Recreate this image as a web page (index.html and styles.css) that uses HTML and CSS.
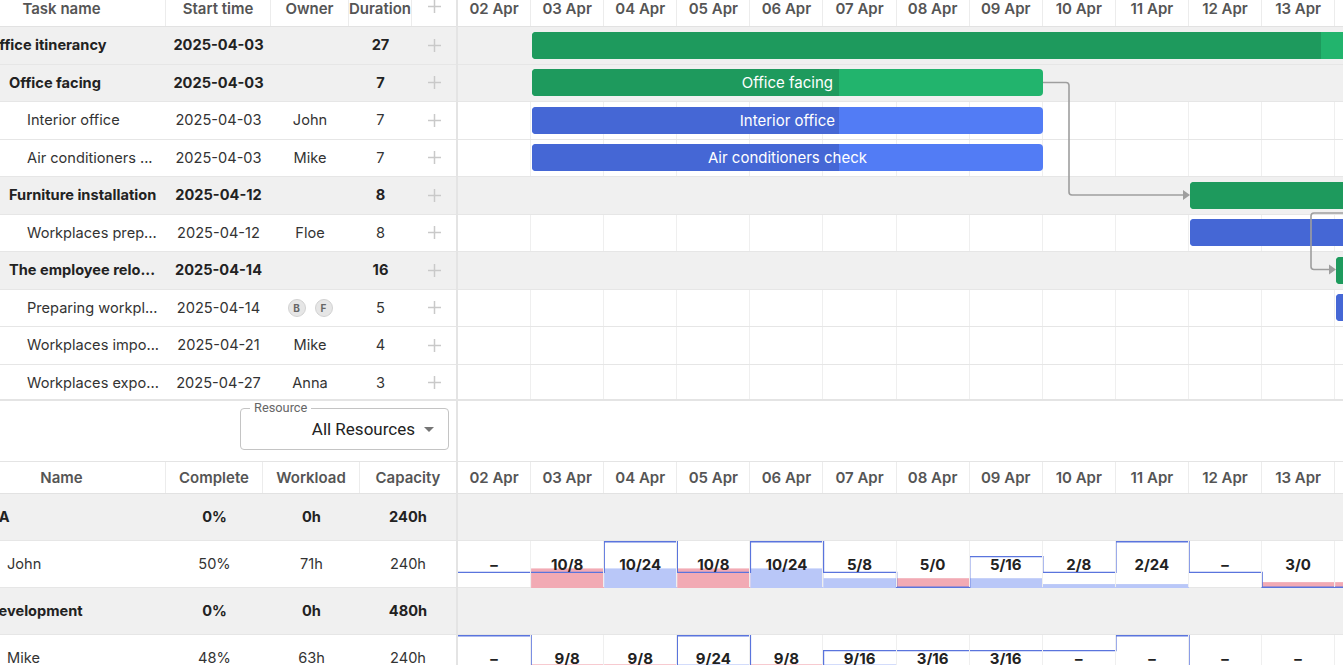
FILE: index.html
```html
<!DOCTYPE html>
<html lang="en">
<head>
    <meta charset="UTF-8">
    <title>Gantt with resources</title>
    <link rel="stylesheet" href="styles.css">
</head>
<body>
<div class="app">
    <div class="gantt">
        <div class="grid">
            <div class="head">
                <div class="cell col-name">Task name</div>
                <div class="cell col-start">Start time</div>
                <div class="cell col-owner">Owner</div>
                <div class="cell col-dur">Duration</div>
                <div class="cell col-add"><svg class="plus" viewBox="0 0 13 13"><path d="M6.5 0v13M0 6.5h13"/></svg></div>
            </div>
            <div class="row group">
                <div class="cell col-name lvl0">Office itinerancy</div>
                <div class="cell col-start">2025-04-03</div>
                <div class="cell col-owner"></div>
                <div class="cell col-dur">27</div>
                <div class="cell col-add"><svg class="plus" viewBox="0 0 13 13"><path d="M6.5 0v13M0 6.5h13"/></svg></div>
            </div>
            <div class="row group">
                <div class="cell col-name lvl1">Office facing</div>
                <div class="cell col-start">2025-04-03</div>
                <div class="cell col-owner"></div>
                <div class="cell col-dur">7</div>
                <div class="cell col-add"><svg class="plus" viewBox="0 0 13 13"><path d="M6.5 0v13M0 6.5h13"/></svg></div>
            </div>
            <div class="row">
                <div class="cell col-name lvl2">Interior office</div>
                <div class="cell col-start">2025-04-03</div>
                <div class="cell col-owner">John</div>
                <div class="cell col-dur">7</div>
                <div class="cell col-add"><svg class="plus" viewBox="0 0 13 13"><path d="M6.5 0v13M0 6.5h13"/></svg></div>
            </div>
            <div class="row">
                <div class="cell col-name lvl2">Air conditioners ...</div>
                <div class="cell col-start">2025-04-03</div>
                <div class="cell col-owner">Mike</div>
                <div class="cell col-dur">7</div>
                <div class="cell col-add"><svg class="plus" viewBox="0 0 13 13"><path d="M6.5 0v13M0 6.5h13"/></svg></div>
            </div>
            <div class="row group">
                <div class="cell col-name lvl1">Furniture installation</div>
                <div class="cell col-start">2025-04-12</div>
                <div class="cell col-owner"></div>
                <div class="cell col-dur">8</div>
                <div class="cell col-add"><svg class="plus" viewBox="0 0 13 13"><path d="M6.5 0v13M0 6.5h13"/></svg></div>
            </div>
            <div class="row">
                <div class="cell col-name lvl2">Workplaces prep...</div>
                <div class="cell col-start">2025-04-12</div>
                <div class="cell col-owner">Floe</div>
                <div class="cell col-dur">8</div>
                <div class="cell col-add"><svg class="plus" viewBox="0 0 13 13"><path d="M6.5 0v13M0 6.5h13"/></svg></div>
            </div>
            <div class="row group">
                <div class="cell col-name lvl1">The employee relo...</div>
                <div class="cell col-start">2025-04-14</div>
                <div class="cell col-owner"></div>
                <div class="cell col-dur">16</div>
                <div class="cell col-add"><svg class="plus" viewBox="0 0 13 13"><path d="M6.5 0v13M0 6.5h13"/></svg></div>
            </div>
            <div class="row">
                <div class="cell col-name lvl2">Preparing workpl...</div>
                <div class="cell col-start">2025-04-14</div>
                <div class="cell col-owner"><span class="avatars"><span class="avatar">B</span><span class="avatar">F</span></span></div>
                <div class="cell col-dur">5</div>
                <div class="cell col-add"><svg class="plus" viewBox="0 0 13 13"><path d="M6.5 0v13M0 6.5h13"/></svg></div>
            </div>
            <div class="row">
                <div class="cell col-name lvl2">Workplaces impo...</div>
                <div class="cell col-start">2025-04-21</div>
                <div class="cell col-owner">Mike</div>
                <div class="cell col-dur">4</div>
                <div class="cell col-add"><svg class="plus" viewBox="0 0 13 13"><path d="M6.5 0v13M0 6.5h13"/></svg></div>
            </div>
            <div class="row">
                <div class="cell col-name lvl2">Workplaces expo...</div>
                <div class="cell col-start">2025-04-27</div>
                <div class="cell col-owner">Anna</div>
                <div class="cell col-dur">3</div>
                <div class="cell col-add"><svg class="plus" viewBox="0 0 13 13"><path d="M6.5 0v13M0 6.5h13"/></svg></div>
            </div>
        </div>

        <div class="chart">
            <div class="scale" id="taskScale"></div>
            <div id="taskRows"></div>
            <svg class="links">
                <path d="M585 82.5 H608 Q611 82.5 611 85.5 V192 Q611 195 614 195 H726"/>
                <polygon points="725,190 732,195 725,200"/>
                <path d="M900 213 H856 Q853 213 853 216 V266.5 Q853 269.5 856 269.5 H872"/>
                <polygon points="871,264.5 878,269.5 871,274.5"/>
            </svg>
        </div>
    </div>

    <div class="toolbar">
        <div class="toolbar-left">
            <fieldset class="res-select">
                <legend>Resource</legend>
                <span class="res-value">All Resources</span>
                <span class="caret"></span>
            </fieldset>
        </div>
        <div class="toolbar-right"></div>
    </div>

    <div class="resources">
        <div class="grid res-grid">
            <div class="head">
                <div class="cell col-name">Name</div>
                <div class="cell col-num">Complete</div>
                <div class="cell col-num">Workload</div>
                <div class="cell col-num">Capacity</div>
            </div>
            <div class="row group">
                <div class="cell col-name lvl0">QA</div>
                <div class="cell col-num">0%</div>
                <div class="cell col-num">0h</div>
                <div class="cell col-num">240h</div>
            </div>
            <div class="row">
                <div class="cell col-name res-child">John</div>
                <div class="cell col-num">50%</div>
                <div class="cell col-num">71h</div>
                <div class="cell col-num">240h</div>
            </div>
            <div class="row group">
                <div class="cell col-name lvl0">Development</div>
                <div class="cell col-num">0%</div>
                <div class="cell col-num">0h</div>
                <div class="cell col-num">480h</div>
            </div>
            <div class="row">
                <div class="cell col-name res-child">Mike</div>
                <div class="cell col-num">48%</div>
                <div class="cell col-num">63h</div>
                <div class="cell col-num">240h</div>
            </div>
        </div>
        <div class="chart">
            <div class="scale" id="resScale"></div>
            <div id="resRows"></div>
        </div>
    </div>
</div>

<script>
    const DAY = 73.1;
    const dates = ['02 Apr', '03 Apr', '04 Apr', '05 Apr', '06 Apr', '07 Apr', '08 Apr',
                   '09 Apr', '10 Apr', '11 Apr', '12 Apr', '13 Apr', '14 Apr'];

    const tasks = [
        { group: true, type: 'project', start: 1, duration: 27, progress: 0.4, text: 'Office itinerancy' },
        { group: true, type: 'project', start: 1, duration: 7, progress: 0.6, text: 'Office facing' },
        { type: 'task', start: 1, duration: 7, progress: 0.6, text: 'Interior office' },
        { type: 'task', start: 1, duration: 7, progress: 0.6, text: 'Air conditioners check' },
        { group: true, type: 'project', start: 10, duration: 8, progress: 0.5, text: 'Furniture installation' },
        { type: 'task', start: 10, duration: 8, progress: 0.5, text: 'Workplaces preparation' },
        { group: true, type: 'project', start: 12, duration: 16, progress: 0.3, text: 'The employee relocation' },
        { type: 'task', start: 12, duration: 5, progress: 0.3, text: 'Preparing workplaces' },
        { type: 'task', start: 19, duration: 4, progress: 0, text: 'Workplaces importation' },
        { type: 'task', start: 25, duration: 3, progress: 0, text: 'Workplaces exportation' }
    ];

    const resources = [
        { group: true },
        { load: [null, 10, 10, 10, 10, 5, 5, 5, 2, 2, null, 3, 3],
          cap:  [8, 8, 24, 8, 24, 8, 0, 16, 8, 24, 8, 0, 0] },
        { group: true },
        { load: [null, 9, 9, 9, 9, 9, 3, 3, null, null, null, null, null],
          cap:  [24, 8, 8, 24, 8, 16, 16, 16, 16, 24, 8, 8, 8] }
    ];

    function fillScale(id) {
        const el = document.getElementById(id);
        dates.forEach(d => {
            const c = document.createElement('div');
            c.className = 'scale-cell';
            c.textContent = d;
            el.appendChild(c);
        });
    }

    function dayCells(row, labels) {
        dates.forEach((d, i) => {
            const c = document.createElement('div');
            c.className = 'day';
            if (labels) c.textContent = labels[i];
            row.appendChild(c);
        });
    }

    function renderTasks() {
        const wrap = document.getElementById('taskRows');
        tasks.forEach(t => {
            const row = document.createElement('div');
            row.className = 'trow' + (t.group ? ' group' : '');
            dayCells(row);

            const bar = document.createElement('div');
            bar.className = 'bar ' + t.type;
            bar.style.left = (t.start * DAY + 1) + 'px';
            bar.style.width = (t.duration * DAY - 1) + 'px';
            bar.innerHTML = `<div class="progress" style="width:${t.progress * 100}%"></div><span>${t.text}</span>`;
            row.appendChild(bar);
            wrap.appendChild(row);
        });
    }

    function renderResources() {
        const wrap = document.getElementById('resRows');
        const H = 47;
        const y = v => Math.min(H - 0.75, Math.max(0.75, H - v / 24 * H));

        resources.forEach(r => {
            const row = document.createElement('div');
            row.className = 'rrow' + (r.group ? ' group' : '');
            if (r.group) {
                dayCells(row);
                wrap.appendChild(row);
                return;
            }

            let fills = '';
            let line = `M0 ${y(r.cap[0])}`;
            r.cap.forEach((c, i) => {
                const w = r.load[i];
                if (w) {
                    const h = w / 24 * H;
                    const cls = w > c ? 'over' : 'ok';
                    fills += `<rect class="${cls}" x="${i * DAY}" y="${H - h}" width="${DAY}" height="${h}"/>`;
                }
                line += ` H${(i + 1) * DAY}`;
                if (i + 1 < r.cap.length) line += ` V${y(r.cap[i + 1])}`;
            });

            row.innerHTML = `<svg class="histo" width="${dates.length * DAY}" height="${H}">${fills}<path d="${line}"/></svg>`;
            dayCells(row, r.load.map((w, i) => w === null ? '–' : `${w}/${r.cap[i]}`));
            wrap.appendChild(row);
        });
    }

    fillScale('taskScale');
    fillScale('resScale');
    renderTasks();
    renderResources();
</script>
</body>
</html>
```

FILE: styles.css
```css
body {
    margin: 0;
    font-family: Inter, "Noto Sans", sans-serif;
    font-size: 14.6px;
    color: #333;
    background: #fff;
}
.app {
    height: 665px;
    overflow: hidden;
}

/* top gantt */
.gantt {
    display: flex;
    height: 399px;
    overflow: hidden;
    border-bottom: 2px solid #e4e4e4;
}
.grid {
    width: 456px;
    flex: none;
    border-right: 2px solid #e4e4e4;
}
.head {
    display: flex;
    height: 27px;
    box-sizing: border-box;
    border-bottom: 1px solid #e2e2e2;
    color: #555;
    font-size: 15px;
    font-weight: 600;
    line-height: 17px;
}
.head .cell {
    border-right: 1px solid #ececec;
    box-sizing: border-box;
}
.head .cell:last-child {
    border-right: none;
}
.head .col-name {
    text-align: center;
    padding-right: 42px;
}
.row {
    display: flex;
    align-items: center;
    height: 37.5px;
    box-sizing: border-box;
    border-bottom: 1px solid #e6e6e6;
}
.row.group {
    background: #f0f0f0;
    font-weight: 700;
    color: #222;
}
.cell {
    flex: none;
    text-align: center;
    white-space: nowrap;
    overflow: hidden;
}
.col-name {
    width: 166px;
    text-align: left;
}
.col-start { width: 105px; }
.col-owner { width: 78px; }
.col-dur { width: 63px; }
.col-add { width: 44px; }
.lvl0 { text-indent: -12px; }
.lvl1 { padding-left: 9px; box-sizing: border-box; }
.lvl2 { padding-left: 27px; box-sizing: border-box; }

.plus {
    width: 13px;
    height: 13px;
    display: block;
    margin: 0 auto;
}
.plus path {
    stroke: #c9c9c9;
    stroke-width: 1.5;
}

.avatars {
    display: inline-flex;
    gap: 9px;
    vertical-align: middle;
}
.avatar {
    width: 18px;
    height: 18px;
    box-sizing: border-box;
    border-radius: 50%;
    background: #e6e6e6;
    border: 1px solid #d2d2d2;
    color: #666;
    font-size: 10px;
    font-weight: 700;
    line-height: 16px;
    text-align: center;
}

/* timeline */
.chart {
    flex: 1;
    position: relative;
    overflow: hidden;
}
.scale {
    display: flex;
    height: 27px;
    box-sizing: border-box;
    border-bottom: 1px solid #e2e2e2;
    color: #555;
    font-size: 15px;
    font-weight: 600;
    line-height: 17px;
}
.scale-cell {
    width: 73.1px;
    flex: none;
    text-align: center;
    box-sizing: border-box;
    border-right: 1px solid #ececec;
}
.trow, .rrow {
    position: relative;
    display: flex;
    box-sizing: border-box;
    border-bottom: 1px solid #e6e6e6;
}
.trow { height: 37.5px; }
.day {
    width: 73.1px;
    flex: none;
    box-sizing: border-box;
    border-right: 1px solid #efefef;
}
.trow.group, .rrow.group {
    background: #f0f0f0;
}
.group .day {
    border-right-color: transparent;
}

.bar {
    position: absolute;
    top: 4.5px;
    height: 27px;
    border-radius: 4px;
    overflow: hidden;
    color: #fff;
    font-size: 15px;
    text-align: center;
    line-height: 27px;
    white-space: nowrap;
}
.bar .progress {
    position: absolute;
    left: 0;
    top: 0;
    bottom: 0;
}
.bar span {
    position: relative;
}
.bar.project { background: #22b46d; }
.bar.project .progress { background: #1e9a5d; }
.bar.task { background: #527cf5; }
.bar.task .progress { background: #4567d5; }

.links {
    position: absolute;
    left: 0;
    top: 0;
    width: 100%;
    height: 100%;
    pointer-events: none;
}
.links path {
    fill: none;
    stroke: #9e9e9e;
    stroke-width: 1.6;
}
.links polygon {
    fill: #9e9e9e;
}

/* resource toolbar */
.toolbar {
    display: flex;
    height: 61px;
    box-sizing: border-box;
    border-bottom: 1px solid #e4e4e4;
}
.toolbar-left {
    width: 458px;
    flex: none;
    box-sizing: border-box;
    border-right: 2px solid #e4e4e4;
    display: flex;
    justify-content: flex-end;
    align-items: flex-start;
    padding-right: 7px;
}
.res-select {
    margin: 0;
    width: 209px;
    height: 49px;
    box-sizing: border-box;
    border: 1px solid #c4c4c4;
    border-radius: 4px;
    padding: 0 14px 6px 0;
    display: flex;
    align-items: center;
    justify-content: flex-end;
    font-family: Roboto, "Liberation Sans", sans-serif;
}
.res-select legend {
    margin-left: 9px;
    padding: 0 4px;
    font-size: 12.8px;
    line-height: 14px;
    color: #666;
}
.res-value {
    font-size: 17px;
    color: #222;
}
.caret {
    margin-left: 9px;
    border-left: 5px solid transparent;
    border-right: 5px solid transparent;
    border-top: 5px solid #757575;
}

/* resource panel */
.resources {
    display: flex;
}
.res-grid .head, .resources .scale {
    height: 32px;
    line-height: 31px;
}
.res-grid .row {
    height: 47px;
}
.col-num { width: 97px; }
.res-grid .col-num:last-child { width: 96px; }
.res-child { padding-left: 7px; box-sizing: border-box; }
.rrow {
    height: 47px;
    align-items: center;
}
.rrow .day {
    height: 100%;
    display: flex;
    align-items: center;
    justify-content: center;
    position: relative;
    font-size: 15px;
    font-weight: 700;
    color: #222;
}
.histo {
    position: absolute;
    left: 0;
    top: 0;
}
.histo rect.over { fill: #f2aab4; }
.histo rect.ok { fill: #b9c7f8; }
.histo path {
    fill: none;
    stroke: #5a74dd;
    stroke-width: 1.4;
}
```
